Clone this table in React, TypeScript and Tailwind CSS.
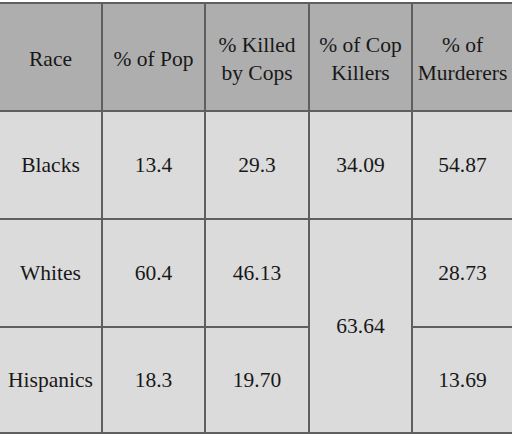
const header = ['Race', '% of Pop', '% Killed by Cops', '% of Cop Killers', '% of Murderers']

const rows = [
  { race: 'Blacks', pop: '13.4', killed: '29.3', murderers: '54.87' },
  { race: 'Whites', pop: '60.4', killed: '46.13', murderers: '28.73' },
  { race: 'Hispanics', pop: '18.3', killed: '19.70', murderers: '13.69' },
]

const cell = 'flex items-center justify-center text-center bg-[#dbdbdb]'

export default function App() {
  return (
    <div className="w-[512px] h-[434px] bg-white pt-[2px] font-['Liberation_Serif','Times_New_Roman',serif] text-[21.5px] text-[#181818] overflow-hidden">
      <div className="grid grid-cols-[101px_101px_102px_101px_1fr] grid-rows-[106px_106px_106px_104px] gap-[2px] bg-[#5f5f5f] border-y-2 border-[#5f5f5f]">
        {/* Header */}
        {header.map((h) => (
          <div key={h} className="flex items-center justify-center text-center bg-[#aeaeae] pt-1 px-1 leading-[28px]">
            {h === '% Killed by Cops' ? (
              <span>% Killed<br />by Cops</span>
            ) : h === '% of Cop Killers' ? (
              <span>% of Cop<br />Killers</span>
            ) : h === '% of Murderers' ? (
              <span>% of<br />Murderers</span>
            ) : (
              h
            )}
          </div>
        ))}

        {/* Body */}
        <div className={cell}>{rows[0].race}</div>
        <div className={cell}>{rows[0].pop}</div>
        <div className={cell}>{rows[0].killed}</div>
        <div className={cell}>34.09</div>
        <div className={cell}>{rows[0].murderers}</div>

        <div className={cell}>{rows[1].race}</div>
        <div className={cell}>{rows[1].pop}</div>
        <div className={cell}>{rows[1].killed}</div>
        <div className={`${cell} row-span-2`}>63.64</div>
        <div className={cell}>{rows[1].murderers}</div>

        <div className={cell}>{rows[2].race}</div>
        <div className={cell}>{rows[2].pop}</div>
        <div className={cell}>{rows[2].killed}</div>
        <div className={cell}>{rows[2].murderers}</div>
      </div>
    </div>
  )
}
